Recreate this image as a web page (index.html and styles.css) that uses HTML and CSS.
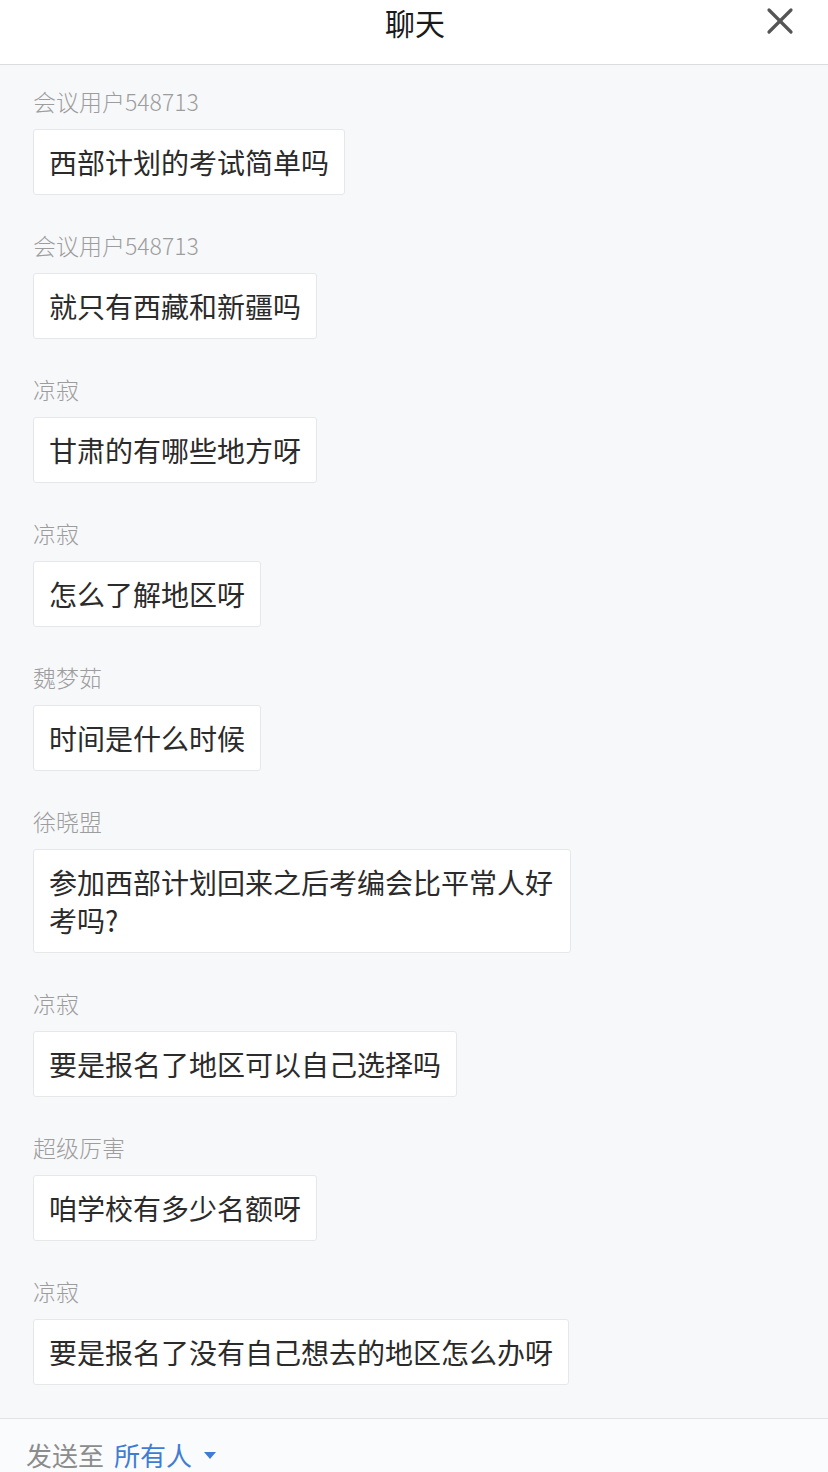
FILE: index.html
```html
<!DOCTYPE html>
<html>
<head>
<meta charset="utf-8">
<title>聊天</title>
<link rel="stylesheet" href="styles.css">
</head>
<body>
<div class="page">
    <div class="header">
        <div class="title">聊天</div>
        <div class="close">
            <svg width="28" height="28" viewBox="0 0 28 28">
                <line x1="3" y1="3" x2="25" y2="25" stroke="#555" stroke-width="3.2" stroke-linecap="round"/>
                <line x1="25" y1="3" x2="3" y2="25" stroke="#555" stroke-width="3.2" stroke-linecap="round"/>
            </svg>
        </div>
    </div>
    <div class="chat">
        <div class="message">
            <div class="name">会议用户548713</div>
            <div class="bubble">西部计划的考试简单吗</div>
        </div>
        <div class="message">
            <div class="name">会议用户548713</div>
            <div class="bubble">就只有西藏和新疆吗</div>
        </div>
        <div class="message">
            <div class="name">凉寂</div>
            <div class="bubble">甘肃的有哪些地方呀</div>
        </div>
        <div class="message">
            <div class="name">凉寂</div>
            <div class="bubble">怎么了解地区呀</div>
        </div>
        <div class="message">
            <div class="name">魏梦茹</div>
            <div class="bubble">时间是什么时候</div>
        </div>
        <div class="message">
            <div class="name">徐晓盟</div>
            <div class="bubble">参加西部计划回来之后考编会比平常人好考吗?</div>
        </div>
        <div class="message">
            <div class="name">凉寂</div>
            <div class="bubble">要是报名了地区可以自己选择吗</div>
        </div>
        <div class="message">
            <div class="name">超级厉害</div>
            <div class="bubble">咱学校有多少名额呀</div>
        </div>
        <div class="message">
            <div class="name">凉寂</div>
            <div class="bubble">要是报名了没有自己想去的地区怎么办呀</div>
        </div>
    </div>
    <div class="footer">
        <span class="sendto">发送至</span>
        <span class="target">所有人</span>
        <span class="arrow"></span>
    </div>
</div>
</body>
</html>
```

FILE: styles.css
```css
html, body {
    margin: 0;
    padding: 0;
}

body {
    font-family: "Noto Sans CJK SC", "Noto Sans", sans-serif;
    background-color: #f7f8fa;
}

.page {
    display: flex;
    flex-direction: column;
    width: 828px;
    height: 1472px;
    overflow: hidden;
}

.header {
    position: relative;
    flex: none;
    height: 64px;
    background-color: #fff;
    border-bottom: 1px solid #dcdcdc;
    display: flex;
    justify-content: center;
}

.title {
    font-size: 30px;
    line-height: 44px;
    color: #1a1a1a;
    padding-left: 2px;
}

.close {
    position: absolute;
    right: 34px;
    top: 7px;
    width: 28px;
    height: 28px;
}

.chat {
    flex: 1;
    overflow: hidden;
    padding: 21px 0 0 33px;
    display: flex;
    flex-direction: column;
    align-items: flex-start;
}

.message {
    display: flex;
    flex-direction: column;
    align-items: flex-start;
    margin-bottom: 35px;
}

.name {
    font-size: 23px;
    line-height: 30px;
    color: #9d9d9d;
    font-weight: 300;
    margin-bottom: 13px;
}

.bubble {
    box-sizing: border-box;
    max-width: 538px;
    padding: 13px 15px;
    font-size: 28px;
    line-height: 38px;
    color: #2b2b2b;
    background-color: #fff;
    border: 1px solid #e6e7e9;
    border-radius: 3px;
}

.footer {
    flex: none;
    height: 54px;
    box-sizing: border-box;
    border-top: 1px solid #e2e3e5;
    background-color: #fafbfc;
    padding: 18px 0 0 26px;
    display: flex;
    align-items: center;
    font-size: 26px;
    line-height: 34px;
}

.sendto {
    color: #8c8c8c;
}

.target {
    color: #3f7dd4;
    margin-left: 10px;
}

.arrow {
    width: 0;
    height: 0;
    margin-left: 12px;
    margin-top: 2px;
    border-left: 6px solid transparent;
    border-right: 6px solid transparent;
    border-top: 7px solid #3f7dd4;
}
```
